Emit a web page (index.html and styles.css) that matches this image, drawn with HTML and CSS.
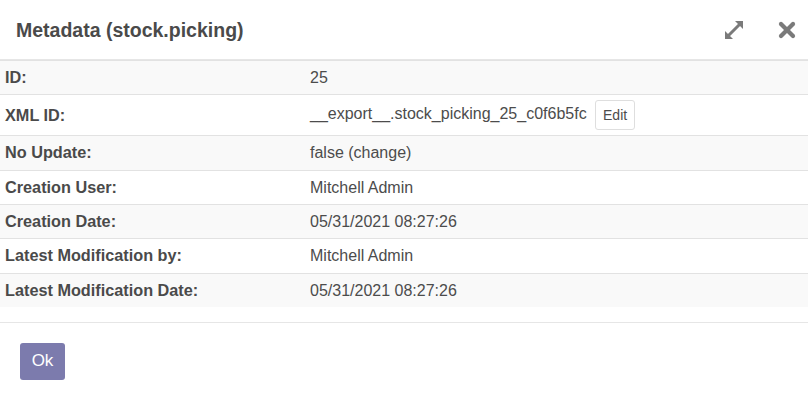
FILE: index.html
```html
<!DOCTYPE html>
<html>
<head>
<meta charset="utf-8">
<link rel="stylesheet" href="styles.css">
</head>
<body>
<div class="modal">
  <header class="modal-header">
    <h4 class="title">Metadata (stock.picking)</h4>
    <div class="tools">
      <svg class="ico-expand" width="22" height="22" viewBox="0 0 22 22">
        <line x1="5" y1="17" x2="17" y2="5" stroke="#7a7a7a" stroke-width="3"/>
        <polygon points="12,2 20,2 20,10" fill="#7a7a7a"/>
        <polygon points="2,12 2,20 10,20" fill="#7a7a7a"/>
      </svg>
      <svg class="ico-close" width="18" height="18" viewBox="0 0 18 18">
        <line x1="3" y1="3" x2="15" y2="15" stroke="#7a7a7a" stroke-width="4.2" stroke-linecap="round"/>
        <line x1="15" y1="3" x2="3" y2="15" stroke="#7a7a7a" stroke-width="4.2" stroke-linecap="round"/>
      </svg>
    </div>
  </header>
  <div class="modal-body">
    <table class="meta">
      <tr class="odd"><th>ID:</th><td>25</td></tr>
      <tr class="xml"><th>XML ID:</th><td>__export__.stock_picking_25_c0f6b5fc <button class="edit">Edit</button></td></tr>
      <tr class="odd"><th>No Update:</th><td>false (change)</td></tr>
      <tr><th>Creation User:</th><td>Mitchell Admin</td></tr>
      <tr class="odd"><th>Creation Date:</th><td>05/31/2021 08:27:26</td></tr>
      <tr><th>Latest Modification by:</th><td>Mitchell Admin</td></tr>
      <tr class="odd"><th>Latest Modification Date:</th><td>05/31/2021 08:27:26</td></tr>
    </table>
  </div>
  <footer class="modal-footer">
    <button class="ok">Ok</button>
  </footer>
</div>
</body>
</html>
```
FILE: styles.css
```css
html, body {
  margin: 0;
  padding: 0;
  background: #fff;
}
body {
  font-family: "Liberation Sans", Arial, sans-serif;
  color: #4c4c4c;
}
.modal {
  width: 808px;
}
.modal-header {
  height: 60px;
  box-sizing: border-box;
  border-bottom: 1px solid #e6e6e6;
  display: flex;
  align-items: center;
  justify-content: space-between;
  padding: 0 12px 0 16px;
}
.title {
  margin: 0;
  font-size: 19.5px;
  font-weight: bold;
  color: #4a4a4a;
  line-height: 22px;
}
.tools {
  display: flex;
  align-items: center;
  gap: 33px;
}
.ico-expand, .ico-close {
  display: block;
}
.modal-body {
  padding-bottom: 15px;
  border-bottom: 1px solid #e6e6e6;
}
.meta {
  width: 100%;
  border-collapse: collapse;
  font-size: 16px;
}
.meta th, .meta td {
  text-align: left;
  padding: 7px 5px;
  line-height: 19.33px;
  border-top: 1px solid #e2e2e2;
  vertical-align: middle;
}
.meta th {
  width: 295px;
  font-weight: bold;
  font-size: 16.25px;
  color: #4a4a4a;
}
.meta td {
  color: #4c4c4c;
}
.meta tr.odd {
  background: #f9f9f9;
}
.meta tr.xml th, .meta tr.xml td {
  padding-top: 5px;
  padding-bottom: 5px;
}
.edit {
  font-family: "Liberation Sans", Arial, sans-serif;
  font-size: 14px;
  color: #4c4c4c;
  background: #fff;
  border: 1px solid #dedede;
  border-radius: 3px;
  height: 30px;
  width: 40px;
  padding: 0;
  vertical-align: middle;
  margin-left: 4px;
}
.modal-footer {
  padding: 20px 20px 27px;
}
.ok {
  font-family: "Liberation Sans", Arial, sans-serif;
  font-size: 17px;
  color: #fff;
  background: #7c7bad;
  border: none;
  border-radius: 3px;
  width: 45px;
  height: 37px;
  padding: 0;
}
```
